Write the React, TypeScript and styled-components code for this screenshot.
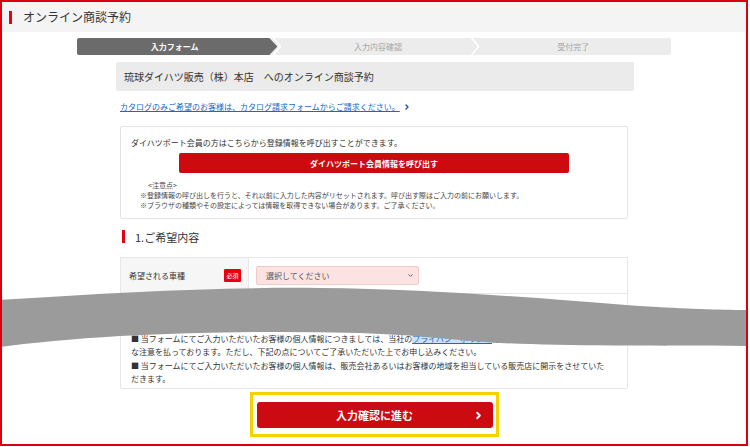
import React from 'react';
import styled, { createGlobalStyle } from 'styled-components';
import { ChevronRight, ChevronDown } from 'lucide-react';

const GlobalStyle = createGlobalStyle`
  html, body {
    margin: 0;
    padding: 0;
    background: #fff;
  }
  body {
    font-family: "Noto Sans CJK JP", "Noto Sans", sans-serif;
    color: #333;
  }
`;

const Frame = styled.div`
  position: relative;
  width: 748px;
  height: 446px;
  box-sizing: border-box;
  border: 2px solid #d9000f;
  overflow: hidden;
`;

const Header = styled.div`
  display: flex;
  align-items: center;
  gap: 11px;
  height: 30px;
  padding-left: 7px;
  background: #f4f4f4;
`;

const HeaderBar = styled.span`
  width: 3px;
  height: 13px;
  background: #e60012;
`;

const HeaderTitle = styled.h1`
  margin: 0;
  font-size: 12px;
  font-weight: 400;
  color: #333;
  line-height: 1;
`;

const Body = styled.div`
  display: flex;
  flex-direction: column;
  align-items: center;
`;

const Steps = styled.ol`
  display: flex;
  width: 594px;
  height: 17px;
  margin: 6px 0 0;
  padding: 0;
  list-style: none;
  background: #ececec;
  border-radius: 2px;
  overflow: hidden;
`;

const Step = styled.li<{ $active?: boolean; $last?: boolean }>`
  position: relative;
  flex: 1;
  display: flex;
  align-items: center;
  justify-content: center;
  padding-right: ${(p) => (p.$active ? '8px' : '0')};
  font-size: 8px;
  font-weight: ${(p) => (p.$active ? 700 : 400)};
  color: ${(p) => (p.$active ? '#fff' : '#a5a5a5')};
  z-index: ${(p) => (p.$active ? 2 : 1)};

  &::before {
    content: '';
    display: ${(p) => (p.$active ? 'block' : 'none')};
    position: absolute;
    top: 0;
    bottom: 0;
    left: 0;
    right: 3px;
    background: #6b6b6b;
    clip-path: polygon(0 0, calc(100% - 8px) 0, 100% 50%, calc(100% - 8px) 100%, 0 100%);
  }

  &::after {
    content: '';
    display: ${(p) => (p.$last ? 'none' : 'block')};
    position: absolute;
    top: 0;
    bottom: 0;
    right: ${(p) => (p.$active ? '-1px' : '-4px')};
    width: 9px;
    background: #fff;
    clip-path: polygon(0 0, 2px 0, 100% 50%, 2px 100%, 0 100%, calc(100% - 2px) 50%);
  }

  span {
    position: relative;
  }
`;

const Column = styled.div`
  display: flex;
  flex-direction: column;
  width: 508px;
`;

const StoreTitle = styled.h2`
  display: flex;
  align-items: center;
  height: 29px;
  margin: 7px -6px 0 -4px;
  padding-left: 8px;
  background: #ebebeb;
  border-radius: 2px;
  font-size: 10px;
  font-weight: 400;
  color: #333;
`;

const CatalogLink = styled.a`
  display: flex;
  align-items: center;
  gap: 3px;
  margin-top: 10px;
  font-size: 8px;
  line-height: 12px;
  color: #2066c4;
  text-decoration: underline;
  cursor: pointer;

  svg {
    color: #1b4a8e;
  }
`;

const Card = styled.div`
  margin-top: 13px;
  padding: 10px 10px 8px;
  border: 1px solid #e4e4e4;
  border-radius: 2px;
`;

const CardText = styled.p`
  margin: 0;
  font-size: 8px;
  line-height: 12px;
  color: #333;
`;

const RedButton = styled.button`
  display: block;
  width: 390px;
  height: 20px;
  margin: 4px auto 0;
  padding: 0;
  border: none;
  border-radius: 2px;
  background: #cc0a0f;
  color: #fff;
  font-family: inherit;
  font-size: 8px;
  font-weight: 700;
  cursor: pointer;
`;

const Notes = styled.div`
  margin-top: 7px;
  padding-left: 9px;
  font-size: 7px;
  line-height: 10px;
  color: #444;
`;

const NoteTitle = styled.div`
  padding-left: 8px;
`;

const SectionHeading = styled.h3`
  display: flex;
  align-items: center;
  gap: 10px;
  height: 13px;
  margin: 11px 0 0;
  padding-left: 2px;
  font-size: 11px;
  font-weight: 400;
  color: #333;

  &::before {
    content: '';
    width: 3px;
    height: 13px;
    background: #e60012;
  }
`;

const Table = styled.div`
  margin-top: 14px;
  border: 1px solid #e6e6e6;
`;

const Row = styled.div`
  display: flex;
  height: 35px;
`;

const LabelCell = styled.div`
  display: flex;
  align-items: center;
  justify-content: space-between;
  width: 128px;
  box-sizing: border-box;
  padding: 0 7px 0 8px;
  background: #f6f6f6;
  border-right: 1px solid #e6e6e6;
  font-size: 8px;
  color: #333;
`;

const Required = styled.span`
  display: inline-flex;
  align-items: center;
  justify-content: center;
  width: 17px;
  height: 13px;
  background: #e60012;
  color: #fff;
  font-size: 6px;
  border-radius: 1px;
`;

const ValueCell = styled.div`
  display: flex;
  align-items: center;
  padding-left: 7px;
`;

const SelectWrap = styled.div`
  position: relative;
  width: 163px;
  height: 19px;

  svg {
    position: absolute;
    right: 5px;
    top: 6px;
    color: #555;
    pointer-events: none;
  }
`;

const Select = styled.select`
  display: block;
  box-sizing: border-box;
  width: 100%;
  height: 100%;
  margin: 0;
  padding: 0 0 0 9px;
  appearance: none;
  border: 1px solid #f1caca;
  border-radius: 2px;
  background: #fde2e2;
  color: #555;
  font-family: inherit;
  font-size: 8px;
`;

const PrivacyBox = styled.div`
  margin-top: -1px;
  padding: 13px 18px 2px 10px;
  border: 1px solid #e6e6e6;
  border-radius: 0 0 2px 2px;
`;

const PrivacyTitle = styled.div`
  margin-bottom: 11px;
  font-size: 9px;
  font-weight: 700;
  line-height: 14px;
`;

const PrivacyText = styled.p`
  margin: 0;
  font-size: 8px;
  line-height: 13.4px;
  color: #333;
`;

const InlineLink = styled.a`
  color: #2066c4;
  background: #cfe0f5;
  text-decoration: underline;
`;

const Highlight = styled.div`
  margin-top: 3px;
  padding: 7px 3px 6px 4px;
  border: 3px solid #f5d300;
`;

const SubmitButton = styled.button`
  position: relative;
  display: flex;
  align-items: center;
  justify-content: center;
  width: 236px;
  height: 26px;
  padding: 0;
  border: none;
  border-radius: 3px;
  background: #cc0a12;
  color: #fff;
  font-family: inherit;
  font-size: 11px;
  font-weight: 700;
  cursor: pointer;

  svg {
    position: absolute;
    right: 9px;
    top: 8px;
  }
`;

const Wave = styled.svg`
  position: absolute;
  left: -2px;
  top: 278px;
  width: 750px;
  height: 75px;
  pointer-events: none;
`;

const steps = ['入力フォーム', '入力内容確認', '受付完了'];

export default function App() {
  return (
    <>
      <GlobalStyle />
      <Frame>
        <Header>
          <HeaderBar />
          <HeaderTitle>オンライン商談予約</HeaderTitle>
        </Header>
        <Body>
          <Steps>
            {steps.map((s, i) => (
              <Step key={s} $active={i === 0} $last={i === steps.length - 1}>
                <span>{s}</span>
              </Step>
            ))}
          </Steps>
          <Column>
            <StoreTitle>琉球ダイハツ販売（株）本店　へのオンライン商談予約</StoreTitle>
            <CatalogLink>
              カタログのみご希望のお客様は、カタログ請求フォームからご請求ください。
              <ChevronRight size={8} strokeWidth={4} />
            </CatalogLink>
            <Card>
              <CardText>ダイハツポート会員の方はこちらから登録情報を呼び出すことができます。</CardText>
              <RedButton>ダイハツポート会員情報を呼び出す</RedButton>
              <Notes>
                <NoteTitle>&lt;注意点&gt;</NoteTitle>
                <div>※登録情報の呼び出しを行うと、それ以前に入力した内容がリセットされます。呼び出す際はご入力の前にお願いします。</div>
                <div>※ブラウザの種類やその設定によっては情報を取得できない場合があります。ご了承ください。</div>
              </Notes>
            </Card>
            <SectionHeading>1.ご希望内容</SectionHeading>
            <Table>
              <Row>
                <LabelCell>
                  希望される車種
                  <Required>必須</Required>
                </LabelCell>
                <ValueCell>
                  <SelectWrap>
                    <Select defaultValue="">
                      <option value="">選択してください</option>
                    </Select>
                    <ChevronDown size={7} strokeWidth={3} />
                  </SelectWrap>
                </ValueCell>
              </Row>
            </Table>
            <PrivacyBox>
              <PrivacyTitle>個人情報の取り扱いについて</PrivacyTitle>
              <PrivacyText>
                ■ 当フォームにてご入力いただいたお客様の個人情報につきましては、当社の
                <InlineLink>プライバシーポリシー</InlineLink>
                に基づき、厳重に管理し、適切な注意を払っております。ただし、下記の点についてご了承いただいた上でお申し込みください。
              </PrivacyText>
              <PrivacyText>
                ■ 当フォームにてご入力いただいたお客様の個人情報は、販売会社あるいはお客様の地域を担当している販売店に開示をさせていただきます。
              </PrivacyText>
            </PrivacyBox>
          </Column>
          <Highlight>
            <SubmitButton>
              入力確認に進む
              <ChevronRight size={11} strokeWidth={4} />
            </SubmitButton>
          </Highlight>
        </Body>
        <Wave viewBox="0 280 750 75" preserveAspectRatio="none">
          <path
            d="M0,300 C120,292 220,287 320,288 C440,289 560,300 640,306 C690,309 720,310 750,310 L750,346 C650,346 560,346 500,343 C450,340 420,335 360,333 C280,331 200,332 120,336 C70,339 30,343 0,347 Z"
            fill="#9b9b9b"
          />
        </Wave>
      </Frame>
    </>
  );
}
